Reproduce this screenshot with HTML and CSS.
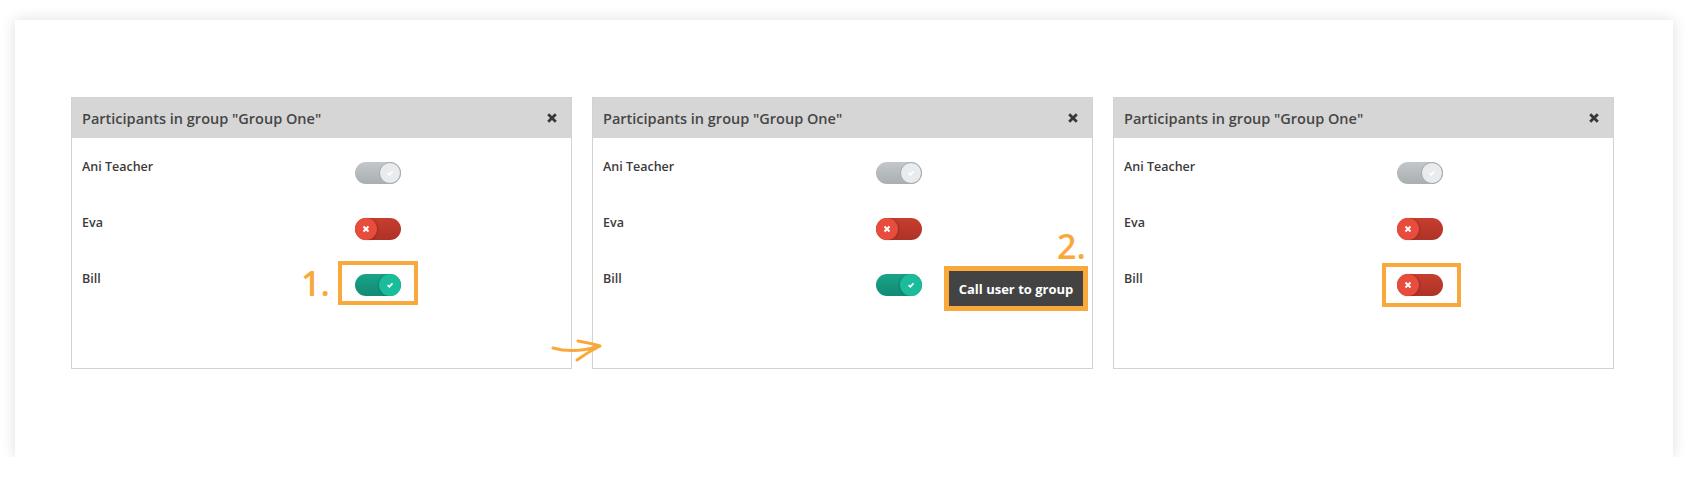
FILE: index.html
```html
<!DOCTYPE html>
<html lang="en">
<head>
    <meta charset="UTF-8">
    <title>Participants in group</title>
    <link rel="stylesheet" href="styles.css">
</head>
<body>
    <div class="sheet">
        <div class="panels">
            <!-- step 1: switch Bill on -->
            <div class="panel">
                <div class="panel-head">
                    <span class="panel-title">Participants in group "Group One"</span>
                    <svg class="close" width="10" height="10" viewBox="0 0 10 10"><path d="M1.2 1.2L8.8 8.8M8.8 1.2L1.2 8.8"/></svg>
                </div>
                <div class="panel-body">
                    <div class="row">
                        <span class="name">Ani Teacher</span>
                        <span class="toggle toggle-idle"><span class="knob"><svg width="8" height="8" viewBox="0 0 8 8"><path d="M1.6 4.2L3.3 5.8L6.5 2.4"/></svg></span></span>
                    </div>
                    <div class="row">
                        <span class="name">Eva</span>
                        <span class="toggle toggle-off"><span class="knob"><svg width="8" height="8" viewBox="0 0 8 8"><path d="M1.5 1.5L6.5 6.5M6.5 1.5L1.5 6.5"/></svg></span></span>
                    </div>
                    <div class="row">
                        <span class="name">Bill</span>
                        <span class="toggle toggle-on"><span class="knob"><svg width="8" height="8" viewBox="0 0 8 8"><path d="M1.6 4.2L3.3 5.8L6.5 2.4"/></svg></span></span>
                    </div>
                </div>
                <span class="step step-1">1.</span>
                <span class="mark mark-1"></span>
            </div>

            <!-- step 2: call the user -->
            <div class="panel">
                <div class="panel-head">
                    <span class="panel-title">Participants in group "Group One"</span>
                    <svg class="close" width="10" height="10" viewBox="0 0 10 10"><path d="M1.2 1.2L8.8 8.8M8.8 1.2L1.2 8.8"/></svg>
                </div>
                <div class="panel-body">
                    <div class="row">
                        <span class="name">Ani Teacher</span>
                        <span class="toggle toggle-idle"><span class="knob"><svg width="8" height="8" viewBox="0 0 8 8"><path d="M1.6 4.2L3.3 5.8L6.5 2.4"/></svg></span></span>
                    </div>
                    <div class="row">
                        <span class="name">Eva</span>
                        <span class="toggle toggle-off"><span class="knob"><svg width="8" height="8" viewBox="0 0 8 8"><path d="M1.5 1.5L6.5 6.5M6.5 1.5L1.5 6.5"/></svg></span></span>
                    </div>
                    <div class="row">
                        <span class="name">Bill</span>
                        <span class="toggle toggle-on"><span class="knob"><svg width="8" height="8" viewBox="0 0 8 8"><path d="M1.6 4.2L3.3 5.8L6.5 2.4"/></svg></span></span>
                        <span class="callout"><button class="call-button">Call user to group</button></span>
                    </div>
                </div>
                <span class="step step-2">2.</span>
                <svg class="arrow" width="54" height="28" viewBox="0 0 54 28"><path d="M3 12Q24 18 50 10M28 5Q40 7 50 10Q38 16 27 24"/></svg>
            </div>

            <!-- result: Bill is off again -->
            <div class="panel">
                <div class="panel-head">
                    <span class="panel-title">Participants in group "Group One"</span>
                    <svg class="close" width="10" height="10" viewBox="0 0 10 10"><path d="M1.2 1.2L8.8 8.8M8.8 1.2L1.2 8.8"/></svg>
                </div>
                <div class="panel-body">
                    <div class="row">
                        <span class="name">Ani Teacher</span>
                        <span class="toggle toggle-idle"><span class="knob"><svg width="8" height="8" viewBox="0 0 8 8"><path d="M1.6 4.2L3.3 5.8L6.5 2.4"/></svg></span></span>
                    </div>
                    <div class="row">
                        <span class="name">Eva</span>
                        <span class="toggle toggle-off"><span class="knob"><svg width="8" height="8" viewBox="0 0 8 8"><path d="M1.5 1.5L6.5 6.5M6.5 1.5L1.5 6.5"/></svg></span></span>
                    </div>
                    <div class="row">
                        <span class="name">Bill</span>
                        <span class="toggle toggle-off"><span class="knob"><svg width="8" height="8" viewBox="0 0 8 8"><path d="M1.5 1.5L6.5 6.5M6.5 1.5L1.5 6.5"/></svg></span></span>
                    </div>
                </div>
                <span class="mark mark-3"></span>
            </div>
        </div>
    </div>
</body>
</html>
```

FILE: styles.css
```css
body {
    margin: 0;
    background-color: #fff;
    color: #444;
    font-family: "Open Sans", sans-serif;
}
.sheet {
    box-sizing: border-box;
    width: 1658px;
    height: 437px;
    margin: 20px 0 0 15px;
    padding: 77px 0 0 56px;
    background-color: #fff;
    box-shadow: 0 0 14px rgba(0, 0, 0, 0.13);
}
.panels {
    display: flex;
    gap: 20px;
}
.panel {
    position: relative;
    box-sizing: border-box;
    width: 501px;
    height: 272px;
    border: 1px solid #d2d2d2;
}
.panel-head {
    display: flex;
    align-items: center;
    justify-content: space-between;
    height: 40px;
    padding: 0 14px 0 10px;
    background-color: #d6d6d6;
}
.panel-title {
    font-size: 14.5px;
    font-weight: 600;
    color: #464646;
}
.close path {
    fill: none;
    stroke: #383838;
    stroke-width: 2.8;
}
.panel-body {
    padding: 20px 0 0 10px;
}
.row {
    display: flex;
    align-items: flex-start;
    height: 26px;
    margin-bottom: 30px;
}
.name {
    width: 273px;
    font-size: 12.5px;
    font-weight: 600;
    line-height: 17px;
    color: #3b3b3b;
}
.toggle {
    position: relative;
    flex: none;
    width: 46px;
    height: 22px;
    margin-top: 4px;
    border-radius: 11px;
}
.toggle-idle {
    background: linear-gradient(#c3c7ca, #a9aeb1);
}
.toggle-off {
    background: linear-gradient(#c73e2f, #ad3326);
}
.toggle-on {
    background: linear-gradient(#17a489, #128b73);
}
.knob {
    position: absolute;
    top: 0;
    box-sizing: border-box;
    width: 22px;
    height: 22px;
    border-radius: 50%;
    display: flex;
    align-items: center;
    justify-content: center;
}
.knob path {
    fill: none;
    stroke: #fff;
    stroke-width: 1.7;
}
.toggle-off .knob path {
    stroke-width: 2;
}
.toggle-idle .knob {
    right: 0;
    background-color: #e9ecee;
    border: 1px solid #a4a9ac;
}
.toggle-off .knob {
    left: 0;
    background-color: #e74c3c;
    box-shadow: 1px 0 2px rgba(0, 0, 0, 0.2);
}
.toggle-on .knob {
    right: 0;
    background-color: #1abc9c;
    box-shadow: -1px 0 2px rgba(0, 0, 0, 0.15);
}
.callout {
    flex: none;
    margin: -4px 0 0 22px;
    border: 5px solid #f9a93b;
}
.call-button {
    display: block;
    width: 134px;
    height: 35px;
    padding: 0;
    border: none;
    background-color: #434343;
    color: #fff;
    font-family: "Open Sans", sans-serif;
    font-size: 13px;
    font-weight: 700;
}
.step {
    position: absolute;
    font-size: 34px;
    font-weight: 600;
    line-height: 1;
    color: #f9a93b;
}
.step-1 {
    left: 229px;
    top: 168px;
}
.step-2 {
    left: 464px;
    top: 131px;
}
.mark {
    position: absolute;
    box-sizing: border-box;
    height: 44px;
    border: 4px solid #f9a93b;
}
.mark-1 {
    left: 266px;
    top: 163px;
    width: 80px;
}
.mark-3 {
    left: 268px;
    top: 165px;
    width: 79px;
}
.arrow {
    position: absolute;
    left: -43px;
    top: 238px;
}
.arrow path {
    fill: none;
    stroke: #f9a93b;
    stroke-width: 3;
    stroke-linecap: round;
    stroke-linejoin: round;
}
```
